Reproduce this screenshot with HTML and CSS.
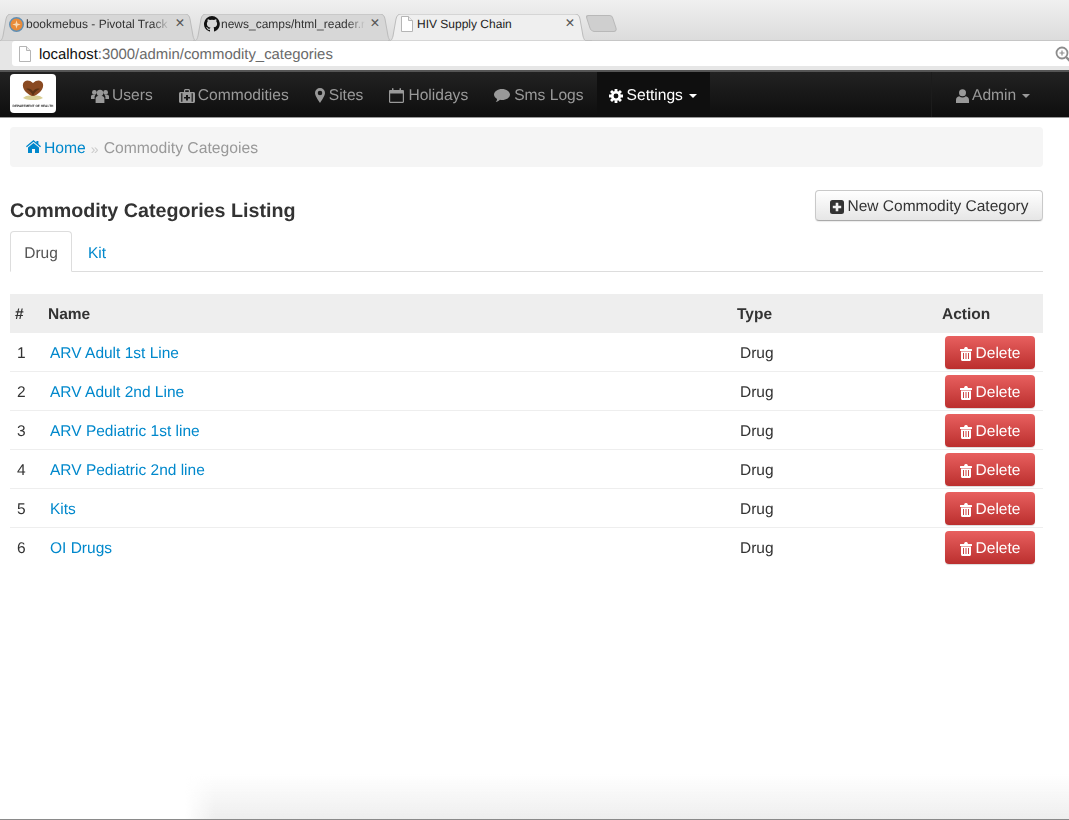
FILE: index.html
```html
<!DOCTYPE html>
<html lang="en">
<head>
<meta charset="utf-8">
<title>HIV Supply Chain</title>
<link rel="stylesheet" href="styles.css">
</head>
<body>
<svg class="sprite" aria-hidden="true">
  <symbol id="i-tab" viewBox="0 0 204 27" preserveAspectRatio="none"><path d="M0 27c3 0 4-1 5-5L8 5c.7-3 2-5 5-5h174c3 0 4.500 2 5 5l3 17c1 4 2 5 5 5h4z"/></symbol>
  <symbol id="i-page" viewBox="0 0 12 16"><path d="M.5.5h7l4 4v11H.5z" fill="#fff" stroke="#b5b5b5"/><path d="M7.5.5v4h4" fill="#eee" stroke="#b5b5b5"/></symbol>
  <symbol id="i-users" viewBox="0 0 18 14"><circle cx="9" cy="4" r="3.2"/><circle cx="3.4" cy="3.4" r="2.4"/><circle cx="14.6" cy="3.4" r="2.4"/><path d="M4.6 14V9.6C4.6 8 5.800 7 7 7h4c1.200 0 2.400 1 2.400 2.600V14z"/><path d="M0 10V7.500C0 6.500.8 5.800 1.800 5.800h2.700L3.600 7.600V10zM18 10V7.500c0-1-.8-1.700-1.800-1.700h-2.700l.9 1.800V10z"/></symbol>
  <symbol id="i-case" viewBox="0 0 16 14"><path fill-rule="evenodd" d="M5 3V1.500C5 .7 5.700 0 6.500 0h3c.8 0 1.500.7 1.500 1.500V3h3.500c.8 0 1.500.7 1.500 1.500v8c0 .8-.7 1.500-1.500 1.500h-13C.7 14 0 13.300 0 12.500v-8C0 3.700.7 3 1.500 3zm1.200 0h3.600V1.300H6.200zM2.200 4.200v8.600h1.200V4.200zm10.400 0v8.600h1.200V4.200zM7 6v2H5v1.400h2v2h2v-2h2V8H9V6z"/></symbol>
  <symbol id="i-pin" viewBox="0 0 10 15"><path fill-rule="evenodd" d="M5 0a5 5 0 0 1 5 5c0 2.500-3 7-5 10C3 12 0 7.500 0 5a5 5 0 0 1 5-5zm0 2.700a2.300 2.300 0 1 0 0 4.600 2.300 2.300 0 0 0 0-4.600z"/></symbol>
  <symbol id="i-cal" viewBox="0 0 15 15"><path fill-rule="evenodd" d="M1.200 2H3V.8C3 .3 3.300 0 3.800 0s.7.300.7.800V2h6V.8c0-.5.300-.8.700-.8s.8.300.8.800V2h1.800c.7 0 1.200.5 1.200 1.200v10.600c0 .7-.5 1.200-1.200 1.200H1.200C.5 15 0 14.500 0 13.800V3.200C0 2.500.5 2 1.200 2zM1.200 5.500v8.300h12.600V5.500z"/></symbol>
  <symbol id="i-chat" viewBox="0 0 16 13"><path d="M8 0c4.400 0 8 2.500 8 5.500S12.400 11 8 11c-.7 0-1.300 0-2-.2C4.800 12 3.200 12.700 1.800 13c.7-.9 1.200-2 1.300-3.100C1.200 8.900 0 7.300 0 5.500 0 2.500 3.600 0 8 0z"/></symbol>
  <symbol id="i-gear" viewBox="0 0 16 16"><circle cx="8" cy="8" r="4.300" fill="none" stroke="currentColor" stroke-width="3"/><g stroke="currentColor" stroke-width="3.200"><path d="M8 0v3M8 13v3M0 8h3M13 8h3M2.300 2.300l2.100 2.100M11.600 11.600l2.100 2.100M2.300 13.700l2.100-2.100M11.600 4.400l2.100-2.100"/></g></symbol>
  <symbol id="i-user" viewBox="0 0 13 14"><circle cx="6.500" cy="3.700" r="3.500"/><path d="M0 14v-3c0-2 1.300-3.500 3.200-3.700 1 .8 2.100 1.200 3.300 1.200s2.300-.4 3.300-1.200C11.700 7.500 13 9 13 11v3z"/></symbol>
  <symbol id="i-home" viewBox="0 0 15 13"><path d="M7.500 0 10.400 2.400V1h2v3.100L15 6.300l-.8.900-6.700-5.500L.8 7.200 0 6.300z"/><path d="M7.500 2.900 13 7.400V13H9V9H6v4H2V7.400z"/></symbol>
  <symbol id="i-plus" viewBox="0 0 14 14"><path fill-rule="evenodd" d="M2.500 0h9A2.500 2.500 0 0 1 14 2.500v9a2.500 2.500 0 0 1-2.500 2.500h-9A2.500 2.500 0 0 1 0 11.500v-9A2.500 2.500 0 0 1 2.500 0zM5.700 2.800v3H2.800v2.400h2.900v3h2.600v-3h2.900V5.800H8.300v-3z"/></symbol>
  <symbol id="i-trash" viewBox="0 0 12 14"><path fill-rule="evenodd" d="M4 2 4.600.6C4.800.2 5.100 0 5.500 0h1c.4 0 .7.200.9.600L8 2h3.500c.3 0 .5.200.5.500V4H0V2.500C0 2.200.2 2 .5 2zM1 4.500h10v8C11 13.300 10.300 14 9.500 14h-7C1.700 14 1 13.300 1 12.500zM3 6v6h1V6zm2.500 0v6h1V6zM8 6v6h1V6z"/></symbol>
  <symbol id="i-github" viewBox="0 0 16 16"><path fill-rule="evenodd" d="M8 0a8 8 0 0 0-2.500 15.600c.4.100.5-.2.500-.4v-1.400c-2.200.5-2.700-1-2.700-1-.4-.9-.9-1.200-.9-1.200-.7-.5.100-.5.100-.5.800.1 1.200.8 1.200.8.700 1.200 1.900.9 2.300.7.100-.5.300-.9.500-1.100-1.800-.2-3.600-.9-3.600-4 0-.9.300-1.600.8-2.100-.1-.2-.4-1 .1-2.100 0 0 .7-.2 2.200.8a7.600 7.600 0 0 1 4 0c1.500-1 2.200-.8 2.200-.8.400 1.100.2 1.900.1 2.100.5.600.8 1.300.8 2.100 0 3.100-1.900 3.700-3.600 3.900.3.300.5.700.5 1.500v2.200c0 .2.100.5.600.4A8 8 0 0 0 8 0z"/></symbol>
</svg>

<div class="page">
  <header class="browser">
    <div class="tabstrip">
      <div class="tab tab-back">
        <svg class="tab-shape"><use href="#i-tab"/></svg>
        <svg class="favicon" viewBox="0 0 16 16"><circle cx="8" cy="8" r="7.200" fill="#e98b3a" stroke="#5f8fb5" stroke-width="1.500"/><path d="M8 3.500 9 7l3.500 1L9 9l-1 3.500L7 9 3.500 8 7 7z" fill="#f7d9b5"/></svg>
        <span class="tab-title">bookmebus - Pivotal Track</span>
        <span class="tab-close">×</span>
      </div>
      <div class="tab tab-back">
        <svg class="tab-shape"><use href="#i-tab"/></svg>
        <svg class="favicon favicon-gh"><use href="#i-github"/></svg>
        <span class="tab-title">news_camps/html_reader.r</span>
        <span class="tab-close">×</span>
      </div>
      <div class="tab tab-active">
        <svg class="tab-shape"><use href="#i-tab"/></svg>
        <svg class="favicon favicon-page"><use href="#i-page"/></svg>
        <span class="tab-title tab-title-active">HIV Supply Chain</span>
        <span class="tab-close">×</span>
      </div>
      <div class="tab-new"></div>
    </div>
    <div class="toolbar">
      <div class="omnibox">
        <svg class="omni-page"><use href="#i-page"/></svg>
        <span class="url"><span class="host">localhost</span>:3000/admin/commodity_categories</span>
        <svg class="omni-zoom" viewBox="0 0 16 16"><circle cx="7" cy="7" r="5.500" fill="none" stroke="#8c8c8c" stroke-width="1.800"/><path d="M11 11l4.500 4.500" stroke="#8c8c8c" stroke-width="2.400"/><path d="M4.500 7h5M7 4.500v5" stroke="#8c8c8c" stroke-width="1.200"/></svg>
      </div>
    </div>
  </header>

  <nav class="navbar">
    <a class="brand">
      <svg class="crest" viewBox="0 0 46 26">
        <path d="M23 20C16 16 12 12 13 7c1-4 6-5 10-1 4-4 9-3 10 1 1 5-3 9-10 13z" fill="#8a4a22"/>
        <path d="M23 19c-1.500-4-4-6-7-7 3-1 5.500 0 7 2.500 1.500-2.500 4-3.500 7-2.500-3 1-5.500 3-7 7z" fill="#5c3315"/>
        <path d="M13 21c3-3 7-3 10-2 3-1 7-1 10 2-4 2-7 2-10 2s-6 0-10-2z" fill="#d9cf95"/>
      </svg>
      <span class="brand-text">DEPARTMENT OF HEALTH</span>
    </a>
    <ul class="nav-list">
      <li class="nav-item"><svg class="ico ico-users"><use href="#i-users"/></svg>Users</li>
      <li class="nav-item"><svg class="ico ico-case"><use href="#i-case"/></svg>Commodities</li>
      <li class="nav-item"><svg class="ico ico-pin"><use href="#i-pin"/></svg>Sites</li>
      <li class="nav-item"><svg class="ico ico-cal"><use href="#i-cal"/></svg>Holidays</li>
      <li class="nav-item"><svg class="ico ico-chat"><use href="#i-chat"/></svg>Sms Logs</li>
      <li class="nav-item nav-active"><svg class="ico ico-gear"><use href="#i-gear"/></svg>Settings<i class="caret"></i></li>
    </ul>
    <div class="nav-user"><svg class="ico ico-user"><use href="#i-user"/></svg>Admin<i class="caret"></i></div>
  </nav>

  <main class="content">
    <div class="breadcrumb">
      <a class="link"><svg class="ico-home"><use href="#i-home"/></svg>Home</a>
      <span class="sep">»</span>
      <span class="crumb">Commodity Categoies</span>
    </div>
    <div class="heading">
      <h1 class="title">Commodity Categories Listing</h1>
      <a class="btn"><svg class="ico-plus"><use href="#i-plus"/></svg>New Commodity Category</a>
    </div>
    <div class="tabs">
      <a class="tabs-item tabs-active">Drug</a>
      <a class="tabs-item link">Kit</a>
    </div>
    <table class="grid">
      <thead>
        <tr><th class="c-num">#</th><th class="c-name">Name</th><th class="c-type">Type</th><th class="c-action">Action</th></tr>
      </thead>
      <tbody>
        <tr><td class="c-idx">1</td><td class="c-link"><a class="link">ARV Adult 1st Line</a></td><td class="c-drug">Drug</td><td class="c-del"><a class="btn-del"><svg class="ico-trash"><use href="#i-trash"/></svg>Delete</a></td></tr>
        <tr><td class="c-idx">2</td><td class="c-link"><a class="link">ARV Adult 2nd Line</a></td><td class="c-drug">Drug</td><td class="c-del"><a class="btn-del"><svg class="ico-trash"><use href="#i-trash"/></svg>Delete</a></td></tr>
        <tr><td class="c-idx">3</td><td class="c-link"><a class="link">ARV Pediatric 1st line</a></td><td class="c-drug">Drug</td><td class="c-del"><a class="btn-del"><svg class="ico-trash"><use href="#i-trash"/></svg>Delete</a></td></tr>
        <tr><td class="c-idx">4</td><td class="c-link"><a class="link">ARV Pediatric 2nd line</a></td><td class="c-drug">Drug</td><td class="c-del"><a class="btn-del"><svg class="ico-trash"><use href="#i-trash"/></svg>Delete</a></td></tr>
        <tr><td class="c-idx">5</td><td class="c-link"><a class="link">Kits</a></td><td class="c-drug">Drug</td><td class="c-del"><a class="btn-del"><svg class="ico-trash"><use href="#i-trash"/></svg>Delete</a></td></tr>
        <tr><td class="c-idx">6</td><td class="c-link"><a class="link">OI Drugs</a></td><td class="c-drug">Drug</td><td class="c-del"><a class="btn-del"><svg class="ico-trash"><use href="#i-trash"/></svg>Delete</a></td></tr>
      </tbody>
    </table>
  </main>
  <div class="window-shadow"></div>
</div>
</body>
</html>
```

FILE: styles.css
```css
* { box-sizing: border-box; }
html, body { margin: 0; height: 100%; overflow: hidden; background: #fff; }
body { font-family: "Liberation Sans", Arial, sans-serif; font-size: 15.5px; color: #333; text-rendering: geometricPrecision; }
.sprite { display: none; }
.page { position: relative; height: 820px; overflow: hidden; filter: blur(0.45px); }
ul { list-style: none; margin: 0; padding: 0; }

/* browser chrome */
.browser { height: 72px; background: #e6e6e6; border-bottom: 2px solid #555; display: flex; flex-direction: column; }
.tabstrip { height: 41px; padding-top: 14px; margin-left: -2px; display: flex; align-items: flex-start; background: linear-gradient(#f0f0f0, #dcdcdc); border-bottom: 1px solid #c6c6c6; }
.tab { position: relative; flex: none; width: 195px; height: 26px; display: flex; align-items: center; padding: 0 7px 6px 11px; font-size: 12px; color: #333; }
.tab-shape { position: absolute; left: 0; top: 0; width: 204px; height: 27px; fill: #d7d7d7; stroke: #bcbcbc; overflow: visible; }
.tab-active .tab-shape { fill: #efefef; }
.favicon { position: relative; width: 15px; height: 15px; margin-right: 2px; flex: none; fill: #111; }
.favicon-gh { width: 16px; height: 16px; margin-right: 1px; }
.favicon-page { width: 12px; height: 16px; margin: 0 4px 0 2px; }
.tab-title { position: relative; flex: 1; min-width: 0; white-space: nowrap; overflow: hidden; -webkit-mask-image: linear-gradient(90deg, #000 88%, transparent); mask-image: linear-gradient(90deg, #000 88%, transparent); }
.tab-title-active { -webkit-mask-image: none; mask-image: none; color: #222; }
.tab-close { position: relative; flex: none; width: 12px; margin-left: 4px; font-size: 16px; line-height: 1; color: #555; text-align: center; }
.tab-new { position: relative; width: 27px; height: 17px; margin: 1px 0 0 5px; background: #cfcfcf; border: 1px solid #b8b8b8; border-radius: 3px 3px 4px 4px; transform: skewX(18deg); }

.toolbar { flex: 1; padding: 0 0 4px 12px; }
.omnibox { height: 25px; background: #fff; border-radius: 3px 0 0 3px; display: flex; align-items: center; padding: 0 0 0 7px; }
.omni-page { width: 12px; height: 16px; flex: none; margin-right: 8px; }
.url { flex: 1; font-size: 14.9px; padding-top: 2px; color: #6a6a6a; }
.host { color: #111; }
.omni-zoom { width: 16px; height: 16px; flex: none; margin-right: -2px; }

/* navbar */
.navbar { height: 45px; background: linear-gradient(#222, #0e0e0e); display: flex; align-items: stretch; color: #999; box-shadow: 0 1px 0 #999; }
.brand { width: 46px; height: 39px; margin: 2px 22px 0 10px; background: #fff; border-radius: 4px; display: flex; flex-direction: column; align-items: center; padding-top: 3px; overflow: hidden; }
.crest { width: 46px; height: 26px; flex: none; }
.brand-text { font-size: 3.2px; font-weight: bold; color: #222; white-space: nowrap; line-height: 6px; }
.nav-list { display: flex; flex: 1; font-size: 15.6px; }
.nav-item { display: flex; align-items: center; padding: 2px 13px 0; white-space: nowrap; }
.nav-active { background: #0f0f0f; color: #fff; padding: 2px 13px 0 12px; }
.ico { fill: currentColor; flex: none; margin-right: 4px; }
.ico-users { width: 18px; height: 14px; margin-right: 3px; }
.ico-case { width: 16px; height: 14px; margin-right: 3px; }
.ico-pin { width: 10px; height: 15px; }
.ico-cal { width: 15px; height: 15px; }
.ico-chat { width: 16px; height: 13px; }
.ico-gear { width: 14px; height: 14px; }
.ico-user { width: 13px; height: 14px; margin-right: 3px; }
.caret { width: 0; height: 0; margin-left: 6px; border-top: 4px solid currentColor; border-left: 4px solid transparent; border-right: 4px solid transparent; }
.nav-user { width: 138px; display: flex; align-items: center; padding: 2px 0 0 24px; border-left: 1px solid #1c1c1c; font-size: 15.6px; }

/* content */
.content { padding: 10px 26px 0 10px; }
.breadcrumb { height: 40px; background: #f5f5f5; border-radius: 4px; padding: 3px 16px 0; display: flex; align-items: center; color: #999; font-size: 15.7px; }
.link { color: #0088cc; text-decoration: none; }
.ico-home { width: 15px; height: 13px; fill: #0088cc; margin-right: 3px; }
.sep { color: #ccc; margin: 0 5px; font-size: 14px; }
.heading { display: flex; justify-content: space-between; align-items: flex-start; margin-top: 23px; height: 41px; }
.title { margin: 10px 0 0; font-size: 19.7px; line-height: 23px; font-weight: bold; color: #333; }
.btn { width: 228px; height: 31px; padding-top: 3px; display: flex; align-items: center; justify-content: center; border: 1px solid #c9c9c9; border-bottom-color: #aaa; border-radius: 4px; background: linear-gradient(#fff, #e6e6e6); color: #333; box-shadow: 0 1px 1px rgba(0,0,0,.08); }
.ico-plus { width: 14px; height: 14px; fill: #333; margin-right: 4px; }
.tabs { display: flex; height: 41px; border-bottom: 1px solid #ddd; }
.tabs-item { display: flex; align-items: center; padding: 5px 14px 0; height: 41px; }
.tabs-active { width: 62px; justify-content: center; color: #555; background: #fff; border: 1px solid #ddd; border-bottom-color: #fff; border-radius: 4px 4px 0 0; }
.tabs-item.link { padding: 6px 16px 0; height: 40px; }

.grid { width: 100%; margin-top: 22px; border-collapse: separate; border-spacing: 0; table-layout: fixed; }
.grid th { height: 39px; padding: 3px 0 0; background: #eee; font-weight: bold; text-align: left; color: #333; }
.grid td { height: 39px; padding: 4px 0 0; border-bottom: 1px solid #eee; color: #333; }
.grid tbody tr:last-child td { border-bottom-color: transparent; }
.c-num { width: 38px; padding-left: 5px !important; }
.c-name { width: 689px; }
.c-type { width: 205px; }
.c-idx { padding-left: 7px !important; }
.c-link { padding-left: 2px !important; }
.c-drug { padding-left: 3px !important; }
.c-del { padding: 1px 0 0 3px !important; }
.btn-del { width: 90px; height: 33px; padding-top: 2px; display: flex; align-items: center; justify-content: center; color: #fff; background: linear-gradient(#e8605f, #bb2f2e); border-radius: 4px; box-shadow: 0 1px 1px rgba(0,0,0,.15); }
.ico-trash { width: 12px; height: 14px; fill: #fff; margin-right: 4px; }

.window-shadow { position: absolute; left: 185px; right: 0; bottom: 0; height: 46px; background: linear-gradient(transparent, #eee); -webkit-mask-image: linear-gradient(90deg, transparent, #000 30px); mask-image: linear-gradient(90deg, transparent, #000 30px); }
.page::after { content: ""; position: absolute; left: 0; right: 0; bottom: 0; height: 1px; background: #8a8a8a; }
```
